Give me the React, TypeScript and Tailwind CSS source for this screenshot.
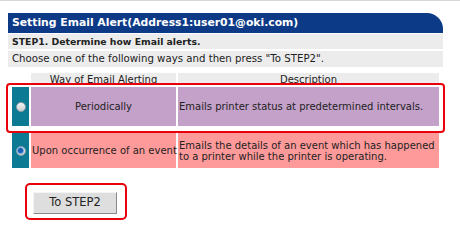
const font = { fontFamily: '"DejaVu Sans", Verdana, sans-serif' };

function Radio({ checked }: { checked?: boolean }) {
  return (
    <span className="flex h-[10px] w-[10px] items-center justify-center rounded-full border border-[#9aa3a8] bg-gradient-to-b from-[#f4f4f4] to-[#c9cdd0]">
      {checked && <span className="h-[5px] w-[5px] rounded-full bg-[#1a5fb4] shadow-[0_0_1px_1px_#6aa6e0]" />}
    </span>
  );
}

export default function App() {
  return (
    <div className="h-[241px] w-[460px] overflow-hidden bg-white text-[#222]" style={font}>
      <div className="h-[1px] bg-[#d8d8d8]" />
      <div className="ml-[8px] mt-[12px] w-[435px]">
        <div className="flex h-[20px] items-center rounded-tr-[16px] bg-[#0c3a86] pl-[4px] text-[10.8px] font-bold text-white">
          Setting Email Alert(Address1:user01@oki.com)
        </div>
        <div className="mt-[1px] flex h-[15px] items-center bg-[#ececec] pl-[4px] text-[9.3px] font-bold">
          STEP1. Determine how Email alerts.
        </div>
        <div className="mt-[2px] flex h-[16px] items-center bg-[#ececec] pl-[4px] text-[10.2px]">
          Choose one of the following ways and then press "To STEP2".
        </div>
      </div>

      <div className="ml-[31px] mt-[6px] flex h-[10px] gap-[2px] overflow-hidden text-[10px] leading-[14px]">
        <div className="w-[145px] bg-[#ececec] text-center">Way of Email Alerting</div>
        <div className="w-[261px] bg-[#ececec] text-center">Description</div>
      </div>

      <div className="ml-[6px] w-[439px] rounded-[4px] border-2 border-[#e8000b] pb-[5px] pl-[4px] pt-[2px]">
        <div className="flex h-[39px] gap-[2px] text-[10px]">
          <div className="flex w-[17px] items-center justify-center bg-[#0d7a94]">
            <Radio />
          </div>
          <div className="flex w-[145px] items-center justify-center bg-[#c4a1c9]">Periodically</div>
          <div className="flex w-[261px] items-center whitespace-nowrap bg-[#c4a1c9] pl-[1px]">
            Emails printer status at predetermined intervals.
          </div>
        </div>
      </div>

      <div className="ml-[12px] flex h-[35px] gap-[2px] text-[10px]">
        <div className="flex w-[17px] items-center justify-center bg-[#0d7a94]">
          <Radio checked />
        </div>
        <div className="flex w-[145px] items-center whitespace-nowrap bg-[#ff9a9a] pl-[1px]">
          Upon occurrence of an event
        </div>
        <div className="flex w-[261px] items-center bg-[#ff9a9a] pl-[1px] leading-[11px]">
          Emails the details of an event which has happened to a printer while the printer is operating.
        </div>
      </div>

      <div className="ml-[25px] mt-[15px] w-[102px] rounded-[5px] border-2 border-[#e8000b] pb-[4px] pl-[6px] pt-[4px]">
        <button className="h-[22px] w-[84px] border border-[#f4f4f4] border-b-[#8a8a8a] border-r-[#8a8a8a] bg-[#dedede] text-[11.5px] text-[#222]" style={font}>
          To STEP2
        </button>
      </div>
    </div>
  );
}
